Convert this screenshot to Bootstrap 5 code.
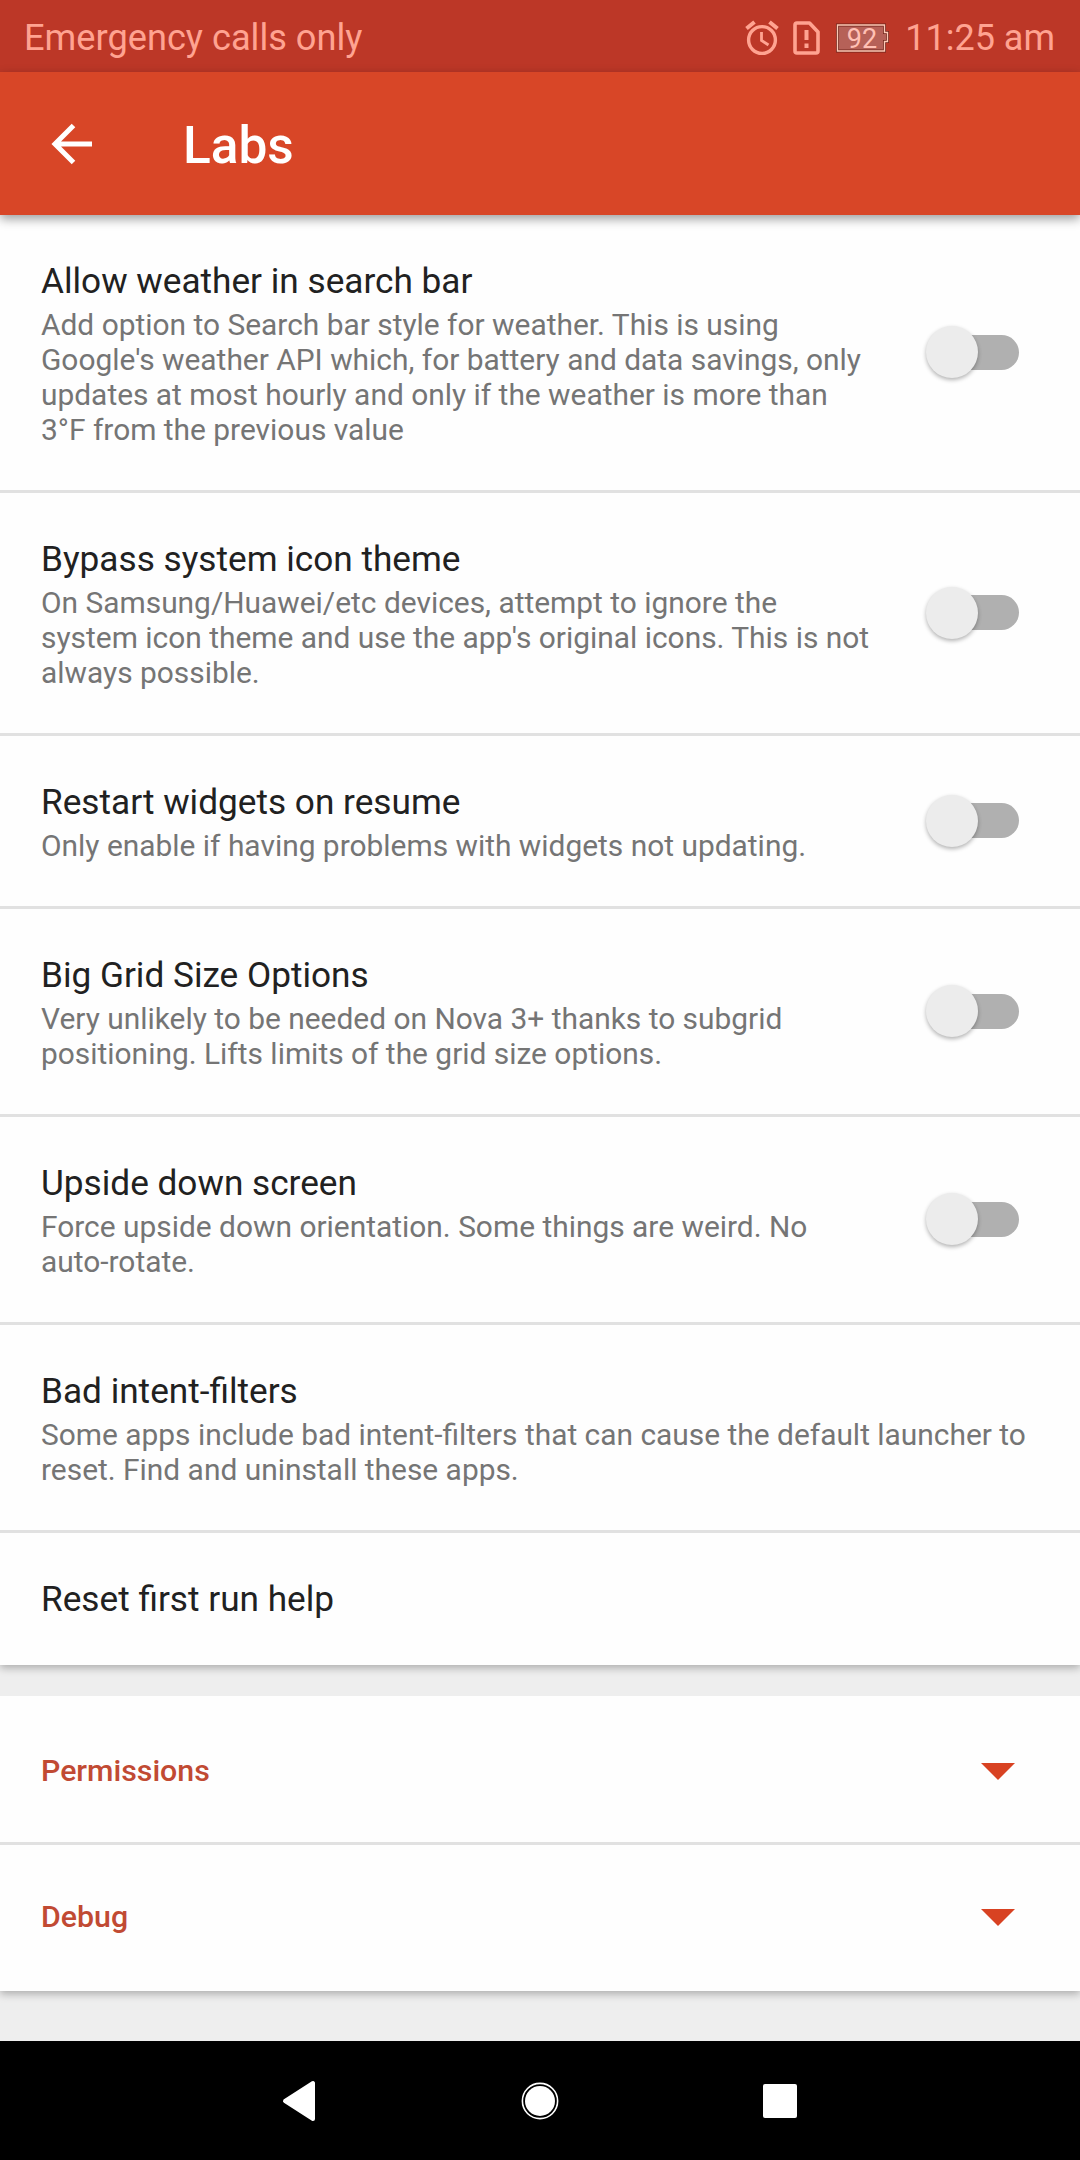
<!DOCTYPE html>
<html lang="en">
<head>
<meta charset="utf-8">
<meta name="viewport" content="width=device-width, initial-scale=1">
<title>Labs</title>
<link href="https://cdn.jsdelivr.net/npm/bootstrap@5.3.0/dist/css/bootstrap.min.css" rel="stylesheet">
<style>
  body { font-family: Roboto, "Noto Sans", sans-serif; background: #eee; color: #212121; height: 2160px; overflow: hidden; }
  .status-bar { height: 72px; padding: 3px 25px 0 24px; background: #bc3727; color: #ffa391; font-size: 36px; line-height: 42px; }
  .carrier { font-size: 36.2px; }
  .icon-sim { margin-left: 14px; }
  .icon-battery { margin-left: 16px; font-size: 27px; overflow: visible; }
  .clock-text { margin-left: 17px; }
  .app-bar { height: 143px; padding: 0 48px; background: #d84627; box-shadow: 0 4px 10px rgba(0,0,0,.38); z-index: 2; }
  .app-title { font-size: 51.4px; line-height: 60px; font-weight: 500; margin: 4px 0 0 87px; color: #fff; }
  .sheet { background: #fefefe; box-shadow: 0 3px 8px rgba(0,0,0,.28); clip-path: inset(0 0 -20px 0); }
  .pref { padding: 45px 47px 45px 41px; }
  .pref + .pref, .group-row + .group-row { border-top: 3px solid #e1e1e1; }
  .pref-title { font-size: 35.2px; line-height: 42px; }
  .pref-summary { font-size: 29.9px; line-height: 35px; color: #757575; padding-top: 5px; margin-bottom: -2px; }
  .has-switch { padding-right: 61px; }
  .has-switch .pref-body { width: 837px; }
  .toggle-track { width: 88px; height: 35px; border-radius: 18px; background: #b0b0b0; margin-bottom: 1px; }
  .toggle-thumb { width: 52px; height: 52px; border-radius: 50%; background: #ececec; box-shadow: 0 2px 4px rgba(0,0,0,.3); flex: none; margin-left: -5px; }
  .group-row { padding: 4px 64px 0 41px; height: 146px; color: #c14a33; font-size: 30.3px; font-weight: 500; }
  .group-row + .group-row { height: 149px; padding: 0 64px 2px 41px; }
  .group-gap { height: 31px; }
  .nav-bar { height: 119px; background: #000; padding-right: 3px; }
  .nav-home { margin: 0 204px; }
</style>
<script src="https://cdn.jsdelivr.net/npm/bootstrap@5.3.0/dist/js/bootstrap.bundle.min.js"></script>
</head>
<body class="d-flex flex-column">
  <header class="status-bar d-flex align-items-center justify-content-between flex-shrink-0">
    <span class="carrier">Emergency calls only</span>
    <div class="d-flex align-items-center">
      <svg width="34" height="36" viewBox="0 0 34 36" fill="none" stroke="#ffa391" stroke-width="3.400"><circle cx="17" cy="20" r="13.400"/><path d="M1.500 8.500l8-6.500M32.500 8.500l-8-6.500" stroke-width="4"/><path d="M16.500 12v8.500l7 4.500" stroke-width="2.800"/></svg>
      <svg class="icon-sim" width="27" height="34" viewBox="0 0 27 34" fill="none" stroke="#ffa391" stroke-width="3.600"><path d="M4 2h12.500l8.500 9v19q0 2-2 2H4q-2 0-2-2V4q0-2 2-2z" stroke-linejoin="round"/><path d="M13.500 9v10M13.500 22.500v4.500" stroke-width="4"/></svg>
      <svg class="icon-battery" width="52" height="30" viewBox="0 0 52 30"><path d="M1.500 2h47v7.500h3v9h-3V28h-47z" fill="#b66158" stroke="#70241b" stroke-width="3"/><path d="M1.500 2h47v7.500h3v9h-3V28h-47z" fill="none" stroke="#ffc9b5" stroke-width="1.400"/><text x="26" y="24.800" text-anchor="middle" fill="#ffc0b4">92</text></svg>
      <span class="clock-text">11:25 am</span>
    </div>
  </header>
  <nav class="app-bar d-flex align-items-center flex-shrink-0 position-relative">
    <svg width="48" height="48" viewBox="0 0 48 48" fill="none" stroke="#fff" stroke-width="5"><path d="M44 24H7M25.500 5.500L7 24l18.500 18.500"/></svg>
    <h1 class="app-title">Labs</h1>
  </nav>

  <main class="sheet flex-shrink-0">
    <div class="pref has-switch d-flex align-items-center justify-content-between">
      <div class="pref-body"><div class="pref-title">Allow weather in search bar</div><div class="pref-summary">Add option to Search bar style for weather. This is using Google's weather API which, for battery and data savings, only updates at most hourly and only if the weather is more than 3°F from the previous value</div></div>
      <div class="toggle-track d-flex align-items-center"><div class="toggle-thumb"></div></div>
    </div>
    <div class="pref has-switch d-flex align-items-center justify-content-between">
      <div class="pref-body"><div class="pref-title">Bypass system icon theme</div><div class="pref-summary">On Samsung/Huawei/etc devices, attempt to ignore the system icon theme and use the app's original icons. This is not always possible.</div></div>
      <div class="toggle-track d-flex align-items-center"><div class="toggle-thumb"></div></div>
    </div>
    <div class="pref has-switch d-flex align-items-center justify-content-between">
      <div class="pref-body"><div class="pref-title">Restart widgets on resume</div><div class="pref-summary">Only enable if having problems with widgets not updating.</div></div>
      <div class="toggle-track d-flex align-items-center"><div class="toggle-thumb"></div></div>
    </div>
    <div class="pref has-switch d-flex align-items-center justify-content-between">
      <div class="pref-body"><div class="pref-title">Big Grid Size Options</div><div class="pref-summary">Very unlikely to be needed on Nova 3+ thanks to subgrid positioning. Lifts limits of the grid size options.</div></div>
      <div class="toggle-track d-flex align-items-center"><div class="toggle-thumb"></div></div>
    </div>
    <div class="pref has-switch d-flex align-items-center justify-content-between">
      <div class="pref-body"><div class="pref-title">Upside down screen</div><div class="pref-summary">Force upside down orientation. Some things are weird. No auto-rotate.</div></div>
      <div class="toggle-track d-flex align-items-center"><div class="toggle-thumb"></div></div>
    </div>
    <div class="pref">
      <div class="pref-title">Bad intent-filters</div><div class="pref-summary">Some apps include bad intent-filters that can cause the default launcher to reset. Find and uninstall these apps.</div>
    </div>
    <div class="pref">
      <div class="pref-title">Reset first run help</div>
    </div>
  </main>
  <div class="group-gap flex-shrink-0"></div>
  <section class="sheet flex-shrink-0">
    <div class="group-row d-flex align-items-center justify-content-between"><span>Permissions</span>
      <svg width="36" height="18" viewBox="0 0 36 18"><path d="M1 1h34L18 18z" fill="#d84222"/></svg></div>
    <div class="group-row d-flex align-items-center justify-content-between"><span>Debug</span>
      <svg width="36" height="18" viewBox="0 0 36 18"><path d="M1 1h34L18 18z" fill="#d84222"/></svg></div>
  </section>

  <footer class="nav-bar mt-auto d-flex align-items-center justify-content-center flex-shrink-0">
    <svg width="36" height="42" viewBox="0 0 36 42"><path d="M32 3v36L4 21z" fill="#fff" stroke="#fff" stroke-width="4" stroke-linejoin="round"/></svg>
    <svg class="nav-home" width="38" height="38" viewBox="0 0 38 38"><circle cx="19" cy="19" r="17.600" fill="none" stroke="#fff" stroke-width="1.600"/><circle cx="19" cy="19" r="15" fill="#fff"/></svg>
    <svg width="34" height="34" viewBox="0 0 34 34"><rect width="34" height="34" rx="2" fill="#fff"/></svg>
  </footer>
</body>
</html>
